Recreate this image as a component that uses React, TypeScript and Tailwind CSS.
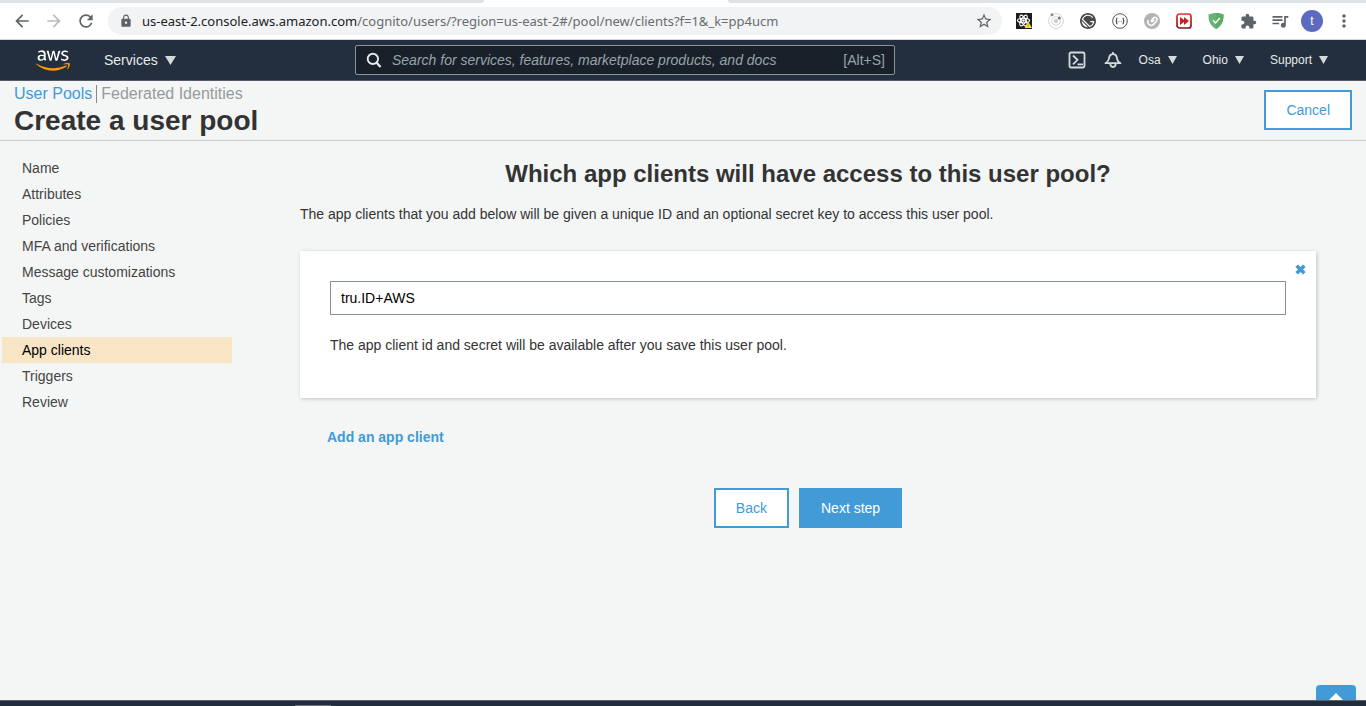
import { useState } from "react";
import type { ReactNode } from "react";
import {
  MdArrowBack,
  MdArrowForward,
  MdExtension,
  MdLock,
  MdMoreVert,
  MdQueueMusic,
  MdRefresh,
  MdStarBorder,
} from "react-icons/md";
import { FaAws } from "react-icons/fa";
import { SiGatsby } from "react-icons/si";

const steps = [
  "Name",
  "Attributes",
  "Policies",
  "MFA and verifications",
  "Message customizations",
  "Tags",
  "Devices",
  "App clients",
  "Triggers",
  "Review",
];

function IconButton({ label, children }: { label: string; children: ReactNode }) {
  return (
    <button type="button" aria-label={label} className="flex size-5 shrink-0 items-center justify-center">
      {children}
    </button>
  );
}

function ReactToolsIcon() {
  return (
    <svg viewBox="0 0 16 16" className="size-4">
      <rect width="16" height="16" fill="#1c1c1c" />
      <g fill="none" stroke="#fff" strokeWidth="1.1">
        <ellipse cx="7.5" cy="7.5" rx="6" ry="2.3" />
        <ellipse cx="7.5" cy="7.5" rx="6" ry="2.3" transform="rotate(60 7.5 7.5)" />
        <ellipse cx="7.5" cy="7.5" rx="6" ry="2.3" transform="rotate(120 7.5 7.5)" />
      </g>
      <circle cx="7.5" cy="7.5" r="1.3" fill="#fff" />
      <path d="M12.200 8.500 16 15H8.500Z" fill="#f9e23c" />
      <path d="M12.200 10.500v2.300M12.200 13.400v.8" stroke="#5c5310" strokeWidth="0.500" />
    </svg>
  );
}

function OrbitIcon() {
  return (
    <svg viewBox="0 0 16 16" className="size-4" fill="none">
      <circle cx="8" cy="8" r="7.400" stroke="#d3d3d3" />
      <circle cx="8" cy="8" r="4.300" stroke="#d3d3d3" />
      <circle cx="8" cy="8" r="2.200" fill="#cfcfcf" />
      <circle cx="4" cy="1.800" r="1.500" fill="#8a8a8a" />
      <circle cx="11.300" cy="5" r="1.500" fill="#777" />
    </svg>
  );
}

function BracesIcon() {
  return (
    <svg viewBox="0 0 16 16" className="size-4" fill="none" stroke="#555">
      <circle cx="8" cy="8" r="7.300" fill="#fff" />
      <path d="M5.500 5C4.300 5 4.700 6 4.700 6.800S4.200 8 3.500 8c.7 0 1.200.4 1.200 1.200S4.300 11 5.500 11M10.500 5c1.200 0 .8 1 .8 1.800s.5 1.200 1.200 1.200c-.7 0-1.200.4-1.200 1.200s.4 1.800-.8 1.800" strokeWidth="1.200" />
      <path d="M6.500 8.500h1M8.700 8.500h1" strokeWidth="0.800" />
    </svg>
  );
}

function ClipIcon() {
  return (
    <svg viewBox="0 0 16 16" className="size-4" fill="none">
      <circle cx="8" cy="8" r="8" fill="#b3b3b3" />
      <path d="M4 7.500c-1.300 4 3.500 6.500 6 3.500l2.500-3c1.800-2.500-1.500-5-3.300-2.800L7.500 7.500c-.5 1 .7 1.700 1.300.9l1-1.200" stroke="#fff" strokeWidth="1.500" strokeLinecap="round" />
    </svg>
  );
}

function FastForwardIcon() {
  return (
    <svg viewBox="0 0 16 16" className="size-4">
      <defs>
        <linearGradient id="fast-forward-frame" x1="0" y1="0" x2="0" y2="1">
          <stop offset="0" stopColor="#d9352f" />
          <stop offset="1" stopColor="#7d1717" />
        </linearGradient>
      </defs>
      <rect x="1" y="1" width="14" height="14" rx="2.500" fill="#fff" stroke="url(#fast-forward-frame)" strokeWidth="1.700" />
      <path d="M4 4 8 7V4l5 4-5 4V9l-4 3Z" fill="#c4231f" />
    </svg>
  );
}

function ShieldIcon() {
  return (
    <svg viewBox="0 0 16 16" className="size-4">
      <path d="M8 0c2.500 0 5.500.6 7.500 1.500 0 5.500-.6 10.500-7.500 14.500C1.100 12 .5 7 .5 1.500 2.500.6 5.500 0 8 0Z" fill="#67b279" />
      <path d="M8 0c2.500 0 5.500.6 7.500 1.500 0 5.500-.6 10.500-7.500 14.500Z" fill="#5cae62" />
      <path d="m5 7.300 2.500 2.600L11.800 5" fill="none" stroke="#fff" strokeWidth="1.400" />
    </svg>
  );
}

function Toolbar() {
  return (
    <div className="border-b border-[#d5d7da] bg-white text-[#5f6368]">
      <div className="flex h-[3px] justify-between">
        <div className="w-[484px] rounded-br bg-[#dee1e6]" />
        <div className="w-[638px] rounded-bl bg-[#dee1e6]" />
      </div>
      <div className="flex h-9 items-center pr-3 pl-3">
        <div className="flex w-24 shrink-0 items-center gap-3">
          <IconButton label="Back in history"><MdArrowBack size={20} /></IconButton>
          <span className="flex text-[#b9bbbe]">
            <IconButton label="Forward in history"><MdArrowForward size={20} /></IconButton>
          </span>
          <IconButton label="Reload"><MdRefresh size={22} /></IconButton>
        </div>
        <div className="flex h-7 min-w-0 flex-1 items-center rounded-full bg-[#f1f3f4] pr-2 pl-[11px]">
          <MdLock size={14} className="shrink-0" />
          <div className="min-w-0 flex-1 truncate pl-[9px] font-['Noto_Sans',sans-serif] text-[13px] leading-5 text-[#686b70]">
            <span className="text-[#202124]">us-east-2.console.aws.amazon.com</span>
            /cognito/users/?region=us-east-2#/pool/new/clients?f=1&amp;_k=pp4ucm
          </div>
          <IconButton label="Bookmark"><MdStarBorder size={18} /></IconButton>
        </div>
        <div className="flex shrink-0 items-center gap-3 pl-3">
          <IconButton label="React tools"><ReactToolsIcon /></IconButton>
          <IconButton label="Orbit"><OrbitIcon /></IconButton>
          <IconButton label="Gatsby"><SiGatsby size={16} color="#4a4a4a" /></IconButton>
          <IconButton label="JSON viewer"><BracesIcon /></IconButton>
          <IconButton label="Clipper"><ClipIcon /></IconButton>
          <IconButton label="Fast forward"><FastForwardIcon /></IconButton>
          <IconButton label="Ad blocker"><ShieldIcon /></IconButton>
          <IconButton label="Extensions"><MdExtension size={17} /></IconButton>
          <IconButton label="Media"><MdQueueMusic size={20} /></IconButton>
          <IconButton label="Profile">
            <span className="flex size-[22px] shrink-0 items-center justify-center rounded-full bg-[#5c6bc0] text-xs text-white">t</span>
          </IconButton>
          <IconButton label="Browser menu"><MdMoreVert size={20} /></IconButton>
        </div>
      </div>
    </div>
  );
}

function Caret({ large = false }: { large?: boolean }) {
  return (
    <svg viewBox="0 0 10 9" preserveAspectRatio="none" className={large ? "h-[9px] w-[11px]" : "h-2 w-[9px]"}>
      <path d="M0 0h10L5 9Z" fill="#d5dbdb" />
    </svg>
  );
}

function ConsoleNav() {
  return (
    <nav className="flex h-[41px] items-center border-b border-[#545b64] bg-[#232f3e] text-[#e6eaea]">
      <div className="flex w-[355px] shrink-0 items-center pl-9">
        <svg className="size-0" aria-hidden="true">
          <defs>
            <linearGradient id="aws-fill" x1="0" y1="0" x2="0" y2="1">
              <stop offset="0.620" stopColor="#fff" />
              <stop offset="0.620" stopColor="#ff9900" />
            </linearGradient>
          </defs>
        </svg>
        <a href="#home" aria-label="AWS home" className="flex">
          <FaAws className="h-[27px] w-[34px] [&_path]:fill-[url(#aws-fill)]" />
        </a>
        <button type="button" className="ml-[34px] flex items-center gap-[7px] text-sm">
          Services <Caret large />
        </button>
      </div>
      <label className="flex h-[30px] w-[540px] shrink-0 items-center rounded-xs border border-[#879596] bg-[#1a202a] px-[9px] text-sm text-[#95a5a6]">
        <svg viewBox="0 0 16 16" className="mr-[9px] size-[18px] shrink-0" fill="none" stroke="#e6eaea" strokeWidth="1.700">
          <circle cx="7" cy="7" r="4.600" />
          <path d="m10.200 10.300 3.600 4" strokeWidth="2" />
        </svg>
        <input
          type="text"
          aria-label="Search services"
          placeholder="Search for services, features, marketplace products, and docs"
          className="min-w-0 flex-1 bg-transparent italic outline-none placeholder:text-[#95a5a6]"
        />
        <span>[Alt+S]</span>
      </label>
      <div className="flex min-w-0 flex-1 items-center justify-end pr-[38px] text-xs">
        <button type="button" aria-label="CloudShell" className="mr-[18px]">
          <svg viewBox="0 0 18 18" className="size-[18px]" fill="none" stroke="#d5dbdb" strokeWidth="1.800">
            <rect x="1.500" y="1.500" width="15" height="15" rx="1.500" />
            <path d="m5 4.500 4.500 4.300L5 13.300M9.500 13.300h5.500" />
          </svg>
        </button>
        <button type="button" aria-label="Notifications" className="mr-[17px]">
          <svg viewBox="0 0 18 18" className="size-[18px]" fill="none" stroke="#d5dbdb" strokeWidth="1.800" strokeLinejoin="round">
            <path d="M9 1v2M5 7.500c.3-2.600 1.800-4.300 4-4.300s3.700 1.700 4 4.300c.2 2.300 1.300 3.300 3.500 4.700h-15C3.700 10.800 4.800 9.800 5 7.500Z" />
            <path d="M6.300 12.500c0 2 1.200 3.500 2.700 3.500s2.700-1.500 2.700-3.500" />
          </svg>
        </button>
        <div className="flex gap-[26px]">
          <button type="button" className="flex items-center gap-[7px]">Osa <Caret /></button>
          <button type="button" className="flex items-center gap-[7px]">Ohio <Caret /></button>
          <button type="button" className="flex items-center gap-[7px]">Support <Caret /></button>
        </div>
      </div>
    </nav>
  );
}

export default function App() {
  const [clientName, setClientName] = useState("tru.ID+AWS");

  return (
    <div className="flex min-h-screen flex-col bg-[#f4f6f6] font-['Liberation_Sans',Arial,sans-serif] text-sm text-[#444]">
      <Toolbar />
      <ConsoleNav />
      <header className="flex items-start justify-between border-b border-[#ccc] px-[14px] pt-1">
        <div>
          <div className="flex text-base text-[#959b9b]">
            <a href="#pools" className="border-r border-[#888] pr-1 leading-[18px] text-[#429ad7]">User Pools</a>
            <a href="#identities" className="pl-1 leading-[18px]">Federated Identities</a>
          </div>
          <h1 className="pb-[2px] text-[28px] leading-[35px] font-bold text-[#333]">Create a user pool</h1>
        </div>
        <button type="button" className="mt-[5px] h-10 border-2 border-[#429ad7] bg-white px-5 text-[#429ad7]">Cancel</button>
      </header>
      <div className="relative flex flex-1">
        <nav aria-label="Steps" className="w-[232px] shrink-0 pt-[14px] pl-[2px]">
          <ul>
            {steps.map((step) => (
              <li key={step}>
                <a
                  href={"#" + step}
                  className={
                    step === "App clients"
                      ? "block bg-[#f8e5c6] pl-5 leading-[26px] text-black"
                      : "block pl-5 leading-[26px]"
                  }
                >
                  {step}
                </a>
              </li>
            ))}
          </ul>
        </nav>
        <main className="min-w-0 flex-1 pt-[17px] pr-[50px] pl-[68px]">
          <h2 className="text-center text-2xl font-bold text-[#333]">
            Which app clients will have access to this user pool?
          </h2>
          <p className="mt-[14px] leading-5 text-[#333]">
            The app clients that you add below will be given a unique ID and an optional secret key to access this user pool.
          </p>
          <section className="mt-[27px] bg-white px-[30px] pb-[43px] shadow-[1px_1px_4px_rgba(0,0,0,0.2)]">
            <div className="-mr-5 flex h-[30px] items-center justify-end pt-[6px]">
              <button type="button" aria-label="Remove app client">
                <svg viewBox="0 0 10 10" className="size-[11px]">
                  <path d="m1.500 1.500 7 7m0-7-7 7" stroke="#429ad7" strokeWidth="3.200" />
                </svg>
              </button>
            </div>
            <input
              type="text"
              aria-label="App client name"
              value={clientName}
              onChange={(event) => setClientName(event.target.value)}
              className="block h-[34px] w-full border border-[#879191] bg-white px-[10px] text-black outline-none"
            />
            <p className="mt-5 leading-5 text-[#333]">
              The app client id and secret will be available after you save this user pool.
            </p>
          </section>
          <button type="button" className="mt-[29px] ml-[27px] block leading-5 font-bold text-[#429ad7]">
            Add an app client
          </button>
          <div className="mt-[41px] flex justify-center gap-[10px]">
            <button type="button" className="h-10 border-2 border-[#429ad7] bg-white px-5 text-[#429ad7]">Back</button>
            <button type="button" className="h-10 border-2 border-[#429ad7] bg-[#429ad7] px-5 text-white">Next step</button>
          </div>
        </main>
        <button
          type="button"
          aria-label="Back to top"
          className="absolute right-[10px] bottom-0 flex h-[15px] w-10 items-end justify-center overflow-hidden rounded-t bg-[#429ad7]"
        >
          <svg viewBox="0 0 14 7" className="h-[7px] w-[14px]">
            <path d="M0 7 7 0l7 7Z" fill="#fff" />
          </svg>
        </button>
      </div>
      <footer className="flex h-[6px] items-end border-t border-[#59616b] bg-[#202b3b] pl-[295px]">
        <div className="h-px w-9 bg-[#6b7380]" />
      </footer>
    </div>
  );
}
